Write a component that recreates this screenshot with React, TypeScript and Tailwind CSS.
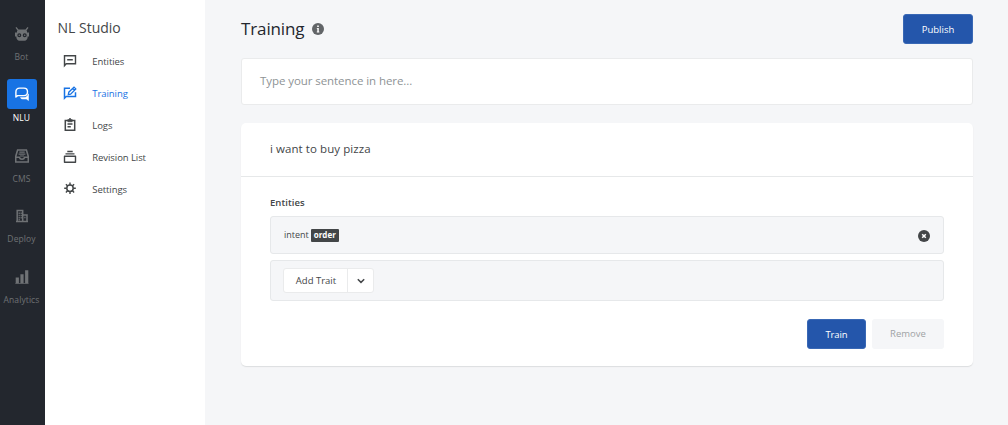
import type { ReactNode } from "react";

const ICON = "h-[14px] w-[14px]";

function BotIcon() {
  return (
    <svg viewBox="0 0 14 14" className={ICON} fill="currentColor">
      <path d="M1 .4 3 3M13 .4 11 3" stroke="currentColor" strokeWidth="1.300" />
      <path fillRule="evenodd" d="M3 2.500h8l1 1.700v1.300h2v4h-1.300c0 2.500-1.300 4.300-3.200 4.300h-5c-1.900 0-3.200-1.800-3.200-4.300H0v-4h2V4.200zM4.300 6.200a2 2 0 1 0 0 4 2 2 0 0 0 0-4zm5.400 0a2 2 0 1 0 0 4 2 2 0 0 0 0-4z" />
      <circle cx="4.300" cy="8.200" r=".8" />
      <circle cx="9.700" cy="8.200" r=".8" />
    </svg>
  );
}

function ChatIcon() {
  return (
    <svg viewBox="0 0 14 14" className={ICON} fill="none" stroke="currentColor" strokeWidth="1.400" strokeLinejoin="round">
      <path d="M.9 10V4.900C.9 2.500 2.400 1.100 4.700 1.100h4.200c2.200 0 3.600 1.400 3.600 3.600S11 8.600 8.900 8.600H2.600z" />
      <path d="M13.500 6.800v6.700l-2.200-1.500H7.800c-1.200 0-2-.5-2.300-1.600H9c2.200 0 3.700-1.100 4.500-3.600z" fill="currentColor" strokeWidth=".5" />
    </svg>
  );
}

function CmsIcon() {
  return (
    <svg viewBox="0 0 14 14" className={ICON} fill="none" stroke="currentColor" strokeWidth="1.600">
      <path d="M2.600 1h8.800l1.900 6.500v5.500H.7V7.500zM.7 8.200h3.600c.4 1.300 1.200 2 2.700 2s2.300-.7 2.700-2h3.600" />
      <path d="M4.300 3.200h5.400M3.600 5.100h6.800M5 7h4" strokeWidth="1.200" />
    </svg>
  );
}

function DeployIcon() {
  return (
    <svg viewBox="0 0 14 14" className={ICON} fill="none" stroke="currentColor" strokeWidth="1.500">
      <path d="M1 12.500h12M2.200 12.500V1.500h5.500v11M8 6h4v6.500" />
      <path d="M3.600 4.200h1.200M5.600 4.200h1.200M3.600 6.500h1.200M5.600 6.500h1.200M3.600 8.800h1.200M5.600 8.800h1.200M3.600 10.800h1.200M9.300 8.500h1.200" />
    </svg>
  );
}

function AnalyticsIcon() {
  return (
    <svg viewBox="0 0 14 14" className={ICON} fill="currentColor">
      <path d="M.7 7.500h3.200v5.700H.7zM5.400 4.200h3.200v9H5.400zM10.100 .3h3.200v12.900h-3.200z" />
      <path d="M.3 13h13.200v.7H.3z" />
    </svg>
  );
}

function EntitiesIcon() {
  return (
    <svg viewBox="0 0 14 14" className={ICON} fill="none" stroke="currentColor" strokeWidth="1.400">
      <path d="M1.500 11.700V1.700h11v8.100H3.200zM4.200 5.700h5.600" />
    </svg>
  );
}

function TrainingIcon() {
  return (
    <svg viewBox="0 0 14 14" className={ICON} fill="none" stroke="currentColor" strokeWidth="1.500">
      <path d="M7 2.200H1.500v10l1.700-1.700h9.300V6.300" />
      <path d="m5.300 8.600.5-2.400L11 1.100l1.800 1.800-5.200 5.200zM9.700 2.400l1.900 1.900" strokeWidth="1.300" />
    </svg>
  );
}

function LogsIcon() {
  return (
    <svg viewBox="0 0 14 14" className={ICON} fill="none" stroke="currentColor" strokeWidth="1.500">
      <path d="M2.300 2.500h9.400v9.800H2.300zM4.500 6h5M4.500 8.800h3.300" />
      <path d="M4.800 1.500h4.400v2.300H4.800z" fill="currentColor" strokeWidth=".5" />
      <path d="M6 1h2" />
    </svg>
  );
}

function RevisionIcon() {
  return (
    <svg viewBox="0 0 14 14" className={ICON} fill="none" stroke="currentColor" strokeWidth="1.400">
      <path d="M1.500 6.300h11v5.900h-11z" strokeLinejoin="round" />
      <path d="M2.500 3.900h9M4.300 1.500h5.400" />
    </svg>
  );
}

function SettingsIcon() {
  return (
    <svg viewBox="0 0 14 14" className={ICON} fill="none" stroke="currentColor">
      <circle cx="7" cy="6.300" r="3.200" strokeWidth="1.500" />
      <path d="M7 .5v2.500M7 9.600v2.500M1.200 6.300h2.500M10.300 6.300h2.500M2.900 2.200l1.800 1.800M9.300 8.600l1.800 1.800M11.100 2.200 9.300 4M4.700 8.600l-1.800 1.800" strokeWidth="1.400" />
    </svg>
  );
}

type RailProps = { label: string; active?: boolean; children: ReactNode };

function RailItem({ label, active = false, children }: RailProps) {
  return (
    <a className={`flex h-[60.750px] w-full flex-col items-center ${active ? "text-white" : "text-[#6f7275]"}`}>
      <span className={`flex h-[30px] w-[30px] items-center justify-center rounded-[3px] ${active ? "-mt-[0.500px] mb-[0.750px] bg-[#1873e4]" : ""}`}>
        {children}
      </span>
      <span className="mt-[2px] text-[8.500px] leading-[12px] tracking-[0.100px] whitespace-nowrap">{label}</span>
    </a>
  );
}

type NavProps = { label: string; active?: boolean; children: ReactNode };

function NavItem({ label, active = false, children }: NavProps) {
  return (
    <a className={`flex h-8 items-center ${active ? "text-[#1873e4]" : "text-[#434648]"}`}>
      <span className="mb-[2px]">{children}</span>
      <span className="ml-[15px] text-[9.500px] leading-[14px] tracking-[-0.070px] whitespace-nowrap">{label}</span>
    </a>
  );
}

export default function App() {
  return (
    <div className="flex h-[425px] w-[1008px] overflow-hidden bg-[#f5f6f8] font-['Open_Sans',sans-serif] text-[#434648]">
      <aside className="flex w-[45px] shrink-0 flex-col items-center bg-[#23272e] pt-[19px] pr-[2px]">
        <RailItem label="Bot"><BotIcon /></RailItem>
        <RailItem label="NLU" active><ChatIcon /></RailItem>
        <RailItem label="CMS"><CmsIcon /></RailItem>
        <RailItem label="Deploy"><DeployIcon /></RailItem>
        <RailItem label="Analytics"><AnalyticsIcon /></RailItem>
      </aside>

      <nav className="w-[160px] shrink-0 bg-white pt-[18px]">
        <h2 className="pl-[12.500px] text-[14px] leading-[20px]">NL Studio</h2>
        <div className="mt-[8px] pl-[18.300px]">
          <NavItem label="Entities"><EntitiesIcon /></NavItem>
          <NavItem label="Training" active><TrainingIcon /></NavItem>
          <NavItem label="Logs"><LogsIcon /></NavItem>
          <NavItem label="Revision List"><RevisionIcon /></NavItem>
          <NavItem label="Settings"><SettingsIcon /></NavItem>
        </div>
      </nav>

      <main className="flex flex-1 flex-col pt-[14px] pr-[35px] pl-[36px]">
        <header className="flex h-[30px] items-center">
          <h1 className="text-[17px] leading-[24px] tracking-[-0.120px] text-[#23272e]">Training</h1>
          <svg viewBox="0 0 12 12" className="ml-[8px] h-3 w-3">
            <circle cx="6" cy="6" r="6" fill="#626568" />
            <path d="M5.200 2.500h1.600v1.400H5.200zM4.800 5h2v3.600h.5v.8H4.800v-.8h.5V5.800h-.5z" fill="#fff" />
          </svg>
          <button className="ml-auto h-[30px] w-[70px] rounded-[3px] border border-[#3968b5] bg-[#2456ab] pt-[2px] text-[9.500px] text-white">Publish</button>
        </header>

        <div className="mt-[14px] flex h-[47px] shrink-0 items-center rounded-[3px] border border-[#eaebec] bg-white pb-[2px] pl-[18px] text-[11.500px] tracking-[-0.070px] text-[#8e9395]">
          Type your sentence in here...
        </div>

        <section className="mt-[18px] h-[243px] shrink-0 rounded-[5px] bg-white shadow-[0_1px_1px_#dcdedf]">
          <div className="flex h-[54px] items-center border-b border-[#e6e8e9] pb-[2px] pl-[29px] text-[11.500px] tracking-[0.070px]">i want to buy pizza</div>
          <div className="px-[29px] pt-[19px]">
            <h3 className="text-[9.500px] leading-[14px] font-semibold tracking-[0.060px]">Entities</h3>
            <div className="mt-[6px] flex h-[38px] items-center rounded-[3px] border border-[#e6e8ea] bg-[#f5f6f8] px-[13px] text-[9px]">
              <span>intent</span>
              <span className="ml-[2px] flex h-[13px] w-[28px] items-center justify-center rounded-[1px] bg-[#434648] text-[8px] font-bold text-white">order</span>
              <svg viewBox="0 0 12 12" className="mt-px ml-auto h-3 w-3">
                <circle cx="6" cy="6" r="6" fill="#434648" />
                <path d="m4.200 4.200 3.600 3.600m0-3.600L4.200 7.800" stroke="#fff" strokeWidth="1.500" />
              </svg>
            </div>
            <div className="mt-[6px] flex h-[41px] items-center rounded-[3px] border border-[#e6e8ea] bg-[#f5f6f8] px-[12px]">
              <div className="flex h-[25px] w-[91px] rounded-[3px] border border-[#eaebec] bg-white">
                <button className="w-[64px] border-r border-[#eaebec] pt-px pl-px text-[9.500px]">Add Trait</button>
                <button className="flex flex-1 items-center justify-center pt-px">
                  <svg viewBox="0 0 8 6" className="h-[6px] w-2" fill="none" stroke="currentColor" strokeWidth="1.500">
                    <path d="m.8 1.200 3.200 3.200 3.200-3.200" />
                  </svg>
                </button>
              </div>
            </div>
            <div className="mt-[18px] flex justify-end gap-[6px]">
              <button className="h-[30px] w-[59px] rounded-[3px] border border-[#3968b5] bg-[#2456ab] pt-[2px] text-[9.500px] tracking-[-0.080px] text-white">Train</button>
              <button className="h-[30px] w-[72px] rounded-[3px] bg-[#f5f6f8] text-[9.500px] text-[#a0a3a5]">Remove</button>
            </div>
          </div>
        </section>
      </main>
    </div>
  );
}
